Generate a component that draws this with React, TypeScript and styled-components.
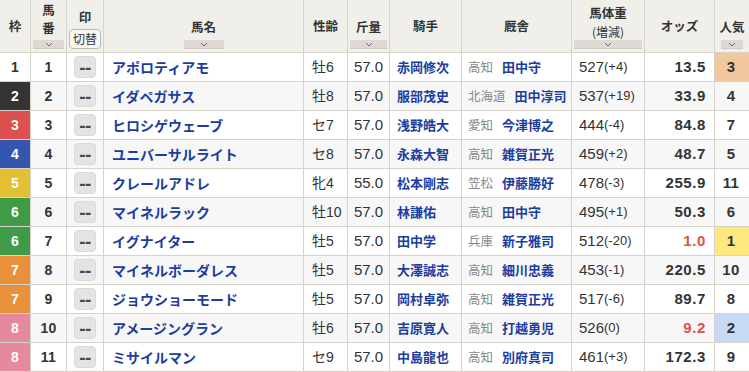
import React from 'react';
import styled, { createGlobalStyle } from 'styled-components';

const GlobalStyle = createGlobalStyle`
  html, body {
    margin: 0;
    padding: 0;
    background: #fff;
    overflow: hidden;
  }
  body {
    font-family: "Liberation Sans", "Noto Sans CJK JP", sans-serif;
    color: #333;
  }
`;

const COLS = '31px 36px 37px 200px 44px 42px 72px 110px 73px 70px 35px';
const LINE = '#d6d3ca';
const BLUE = '#1c3d9e';
const RED = '#d9534f';

const WAKU_COLORS: Record<number, { bg: string; fg: string }> = {
  1: { bg: '#ffffff', fg: '#333' },
  2: { bg: '#333333', fg: '#fff' },
  3: { bg: '#dc504d', fg: '#fff' },
  4: { bg: '#3455b0', fg: '#fff' },
  5: { bg: '#e3bf34', fg: '#fff' },
  6: { bg: '#3f9b48', fg: '#fff' },
  7: { bg: '#e8903a', fg: '#fff' },
  8: { bg: '#e48a9c', fg: '#fff' },
};

const NINKI_BG: Record<number, string> = {
  1: '#fde97d',
  2: '#c8d9f6',
  3: '#f1c79c',
};

interface Horse {
  waku: number;
  num: number;
  name: string;
  sexAge: string;
  kinryo: string;
  jockey: string;
  region: string;
  trainer: string;
  weight: string;
  diff: string;
  odds: string;
  ninki: number;
}

const horses: Horse[] = [
  { waku: 1, num: 1, name: 'アポロティアモ', sexAge: '牡6', kinryo: '57.0', jockey: '赤岡修次', region: '高知', trainer: '田中守', weight: '527', diff: '(+4)', odds: '13.5', ninki: 3 },
  { waku: 2, num: 2, name: 'イダペガサス', sexAge: '牡8', kinryo: '57.0', jockey: '服部茂史', region: '北海道', trainer: '田中淳司', weight: '537', diff: '(+19)', odds: '33.9', ninki: 4 },
  { waku: 3, num: 3, name: 'ヒロシゲウェーブ', sexAge: 'セ7', kinryo: '57.0', jockey: '浅野皓大', region: '愛知', trainer: '今津博之', weight: '444', diff: '(-4)', odds: '84.8', ninki: 7 },
  { waku: 4, num: 4, name: 'ユニバーサルライト', sexAge: 'セ8', kinryo: '57.0', jockey: '永森大智', region: '高知', trainer: '雑賀正光', weight: '459', diff: '(+2)', odds: '48.7', ninki: 5 },
  { waku: 5, num: 5, name: 'クレールアドレ', sexAge: '牝4', kinryo: '55.0', jockey: '松本剛志', region: '笠松', trainer: '伊藤勝好', weight: '478', diff: '(-3)', odds: '255.9', ninki: 11 },
  { waku: 6, num: 6, name: 'マイネルラック', sexAge: '牡10', kinryo: '57.0', jockey: '林謙佑', region: '高知', trainer: '田中守', weight: '495', diff: '(+1)', odds: '50.3', ninki: 6 },
  { waku: 6, num: 7, name: 'イグナイター', sexAge: '牡5', kinryo: '57.0', jockey: '田中学', region: '兵庫', trainer: '新子雅司', weight: '512', diff: '(-20)', odds: '1.0', ninki: 1 },
  { waku: 7, num: 8, name: 'マイネルボーダレス', sexAge: '牡5', kinryo: '57.0', jockey: '大澤誠志', region: '高知', trainer: '細川忠義', weight: '453', diff: '(-1)', odds: '220.5', ninki: 10 },
  { waku: 7, num: 9, name: 'ジョウショーモード', sexAge: '牡5', kinryo: '57.0', jockey: '岡村卓弥', region: '高知', trainer: '雑賀正光', weight: '517', diff: '(-6)', odds: '89.7', ninki: 8 },
  { waku: 8, num: 10, name: 'アメージングラン', sexAge: '牡6', kinryo: '57.0', jockey: '吉原寛人', region: '高知', trainer: '打越勇児', weight: '526', diff: '(0)', odds: '9.2', ninki: 2 },
  { waku: 8, num: 11, name: 'ミサイルマン', sexAge: 'セ9', kinryo: '57.0', jockey: '中島龍也', region: '高知', trainer: '別府真司', weight: '461', diff: '(+3)', odds: '172.3', ninki: 9 },
];

const Chevron = () => (
  <svg width="8" height="5" viewBox="0 0 8 5">
    <path d="M1 1 L4 4 L7 1" fill="none" stroke="#666" strokeWidth="1" />
  </svg>
);

const App: React.FC = () => {
  return (
    <>
      <GlobalStyle />
      <Table>
        <HeadRow>
          <HeadCell>
            <HeadLabel>枠</HeadLabel>
          </HeadCell>
          <HeadCell withBar>
            <HeadLabel lh={14} mb={4}>馬</HeadLabel>
            <HeadLabel lh={14}>番</HeadLabel>
            <SortBar><Chevron /></SortBar>
          </HeadCell>
          <HeadCell withBar>
            <HeadLabel>印</HeadLabel>
            <SwitchButton>切替</SwitchButton>
          </HeadCell>
          <HeadCell withBar>
            <HeadLabel>馬名</HeadLabel>
            <SortBar width="40px"><Chevron /></SortBar>
          </HeadCell>
          <HeadCell>
            <HeadLabel>性齢</HeadLabel>
          </HeadCell>
          <HeadCell withBar>
            <HeadLabel>斤量</HeadLabel>
            <SortBar><Chevron /></SortBar>
          </HeadCell>
          <HeadCell>
            <HeadLabel>騎手</HeadLabel>
          </HeadCell>
          <HeadCell>
            <HeadLabel>厩舎</HeadLabel>
          </HeadCell>
          <HeadCell withBar>
            <HeadLabel lh={14} mb={3}>馬体重</HeadLabel>
            <HeadSub>(増減)</HeadSub>
            <SortBar near><Chevron /></SortBar>
          </HeadCell>
          <HeadCell>
            <HeadLabel>オッズ</HeadLabel>
          </HeadCell>
          <HeadCell withBar>
            <HeadLabel>人気</HeadLabel>
            <SortBar width="22px"><Chevron /></SortBar>
          </HeadCell>
        </HeadRow>

        {horses.map((h, i) => {
          const waku = WAKU_COLORS[h.waku];
          const favourite = parseFloat(h.odds) < 10;
          return (
            <Row key={h.num} even={i % 2 === 1}>
              <WakuCell bg={waku.bg} fg={waku.fg}>{h.waku}</WakuCell>
              <NumCell>{h.num}</NumCell>
              <Cell align="center">
                <MarkButton>--</MarkButton>
              </Cell>
              <NameCell>{h.name}</NameCell>
              <TextCell>{h.sexAge}</TextCell>
              <Cell align="center">{h.kinryo}</Cell>
              <JockeyCell>{h.jockey}</JockeyCell>
              <Cell align="flex-start">
                <Region>{h.region}</Region>
                <Trainer>{h.trainer}</Trainer>
              </Cell>
              <Cell align="flex-start">
                <Weight>{h.weight}</Weight>
                <WeightDiff>{h.diff}</WeightDiff>
              </Cell>
              <OddsCell red={favourite}>{h.odds}</OddsCell>
              <NinkiCell bg={NINKI_BG[h.ninki]}>{h.ninki}</NinkiCell>
            </Row>
          );
        })}
      </Table>
    </>
  );
};

const Table = styled.div`
  width: 750px;
  display: flex;
  flex-direction: column;
`;

const HeadRow = styled.div`
  display: grid;
  grid-template-columns: ${COLS};
  height: 53px;
  background: #f1efe9;
  border-bottom: 1px solid ${LINE};
  box-sizing: border-box;
`;

const HeadCell = styled.div<{ withBar?: boolean }>`
  display: flex;
  flex-direction: column;
  align-items: center;
  justify-content: ${p => (p.withBar ? 'flex-end' : 'center')};
  padding: ${p => (p.withBar ? '0 2px 3px' : '0 0 1px')};
  border-right: 1px solid ${LINE};
  box-sizing: border-box;
  overflow: hidden;
`;

const HeadLabel = styled.span<{ lh?: number; mb?: number }>`
  font-family: "Noto Sans CJK JP", sans-serif;
  font-size: 12.5px;
  font-weight: 700;
  line-height: ${p => p.lh || 16}px;
  margin-bottom: ${p => p.mb || 0}px;
  color: #333;
  white-space: nowrap;
`;

const HeadSub = styled.span`
  font-family: "Noto Sans CJK JP", sans-serif;
  font-size: 12px;
  line-height: 14px;
  margin-top: 2px;
  color: #333;
`;

const SortBar = styled.div<{ width?: string; near?: boolean }>`
  align-self: ${p => (p.width ? 'center' : 'stretch')};
  width: ${p => p.width || 'auto'};
  height: 9px;
  margin-top: ${p => (p.near ? '1px' : '5px')};
  background: #dedad3;
  border-bottom: 1px solid #cfcbc2;
  display: flex;
  align-items: center;
  justify-content: center;
  box-sizing: border-box;
  flex-shrink: 0;
`;

const SwitchButton = styled.div`
  margin-top: 4px;
  width: 32px;
  height: 20px;
  border: 1px solid #bdbab2;
  border-radius: 4px;
  background: #f8f7f3;
  font-family: "Noto Sans CJK JP", sans-serif;
  font-size: 12px;
  line-height: 18px;
  text-align: center;
  color: #333;
  box-sizing: border-box;
`;

const Row = styled.div<{ even: boolean }>`
  display: grid;
  grid-template-columns: ${COLS};
  height: 29px;
  background: ${p => (p.even ? '#f7f7f7' : '#fff')};
  border-bottom: 1px solid ${LINE};
  box-sizing: border-box;
`;

const Cell = styled.div<{ align?: string }>`
  display: flex;
  align-items: center;
  justify-content: ${p => p.align || 'flex-start'};
  padding: 0 7px;
  border-right: 1px solid ${LINE};
  box-sizing: border-box;
  font-size: 15px;
  line-height: 18px;
  color: #333;
  white-space: nowrap;
  overflow: hidden;
`;

const WakuCell = styled(Cell)<{ bg: string; fg: string }>`
  justify-content: center;
  padding: 0;
  background: ${p => p.bg};
  color: ${p => p.fg};
  font-weight: 700;
  font-size: 14px;
`;

const NumCell = styled(Cell)`
  justify-content: center;
  padding: 0;
  font-weight: 700;
  font-size: 14px;
  letter-spacing: 0.3px;
`;

const MarkButton = styled.div`
  width: 22px;
  height: 22px;
  border-radius: 4px;
  background: #e4e4e4;
  border: 1px solid #dadada;
  box-sizing: border-box;
  display: flex;
  align-items: center;
  justify-content: center;
  font-size: 19px;
  font-weight: 700;
  letter-spacing: -0.5px;
  line-height: 1;
  color: #4a4a4a;
`;

const NameCell = styled(Cell)`
  padding-left: 8px;
  font-family: "Noto Sans CJK JP", sans-serif;
  font-weight: 700;
  font-size: 14px;
  color: ${BLUE};
`;

const TextCell = styled(Cell)`
  padding-left: 8px;
  font-size: 14px;
`;

const JockeyCell = styled(Cell)`
  font-family: "Noto Sans CJK JP", sans-serif;
  font-weight: 700;
  font-size: 13px;
  color: ${BLUE};
`;

const Region = styled.span`
  font-family: "Noto Sans CJK JP", sans-serif;
  font-size: 12.5px;
  color: #888;
  margin-right: 9px;
  margin-left: -1px;
`;

const Trainer = styled.span`
  font-family: "Noto Sans CJK JP", sans-serif;
  font-size: 13px;
  font-weight: 700;
  color: ${BLUE};
`;

const Weight = styled.span`
  font-size: 15px;
`;

const WeightDiff = styled.span`
  font-size: 13px;
`;

const OddsCell = styled(Cell)<{ red: boolean }>`
  justify-content: flex-end;
  padding-right: 8px;
  font-weight: 700;
  letter-spacing: 0.6px;
  color: ${p => (p.red ? RED : '#333')};
`;

const NinkiCell = styled(Cell)<{ bg?: string }>`
  justify-content: center;
  padding: 0 2px 0 0;
  font-weight: 700;
  letter-spacing: 0.4px;
  background: ${p => p.bg || 'transparent'};
`;

export default App;
